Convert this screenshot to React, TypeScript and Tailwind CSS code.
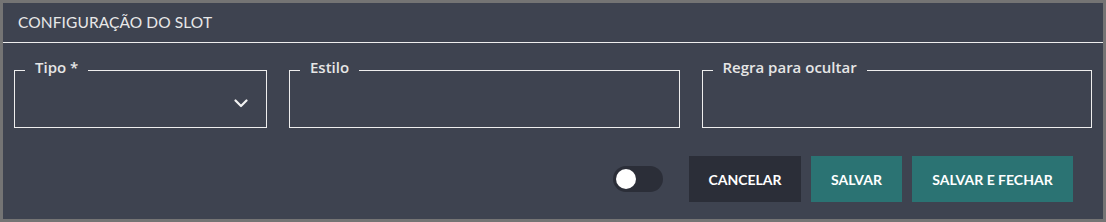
import React, { useState } from 'react';

// Slot configuration panel: title bar, three outlined fields, toggle and action buttons
function Field({ label, select = false }: { label: string; select?: boolean }) {
  return (
    <fieldset className="h-[71px] border border-[#eeeeee] pl-[10px] pr-[18px] flex items-center justify-end min-w-0">
      <legend className="px-[10px] pb-[6px] text-[15px] leading-[20px] font-semibold text-[#e6e6e6] font-['Open_Sans',sans-serif]">
        {label}
      </legend>
      {select && (
        <svg width="14" height="9" viewBox="0 0 14 9" className="mb-[4px]" fill="none">
          <path d="M1.5 1.5 L7 7 L12.5 1.5" stroke="#f2f2f2" strokeWidth="2.2" strokeLinecap="round" strokeLinejoin="round" />
        </svg>
      )}
    </fieldset>
  );
}

export default function App() {
  const [enabled, setEnabled] = useState(false);

  return (
    <main className="w-[1106px] h-[222px] border-[3px] border-[#747474] bg-[#3e4350] font-['Lato',sans-serif] flex flex-col">
      {/* Header */}
      <div className="h-[40px] border-b border-[#eeeeee] pl-[15px] flex items-center">
        <h1 className="text-[15.5px] text-[#e8e8e8] tracking-[0.1px] pt-[1px]">CONFIGURAÇÃO DO SLOT</h1>
      </div>

      {/* Fields */}
      <div className="grid grid-cols-[253px_1fr_1fr] gap-[22px] px-[11px] pt-[14px]">
        <Field label="Tipo *" select />
        <Field label="Estilo" />
        <Field label="Regra para ocultar" />
      </div>

      {/* Actions */}
      <div className="flex items-center justify-end gap-[10px] mt-[28px] pr-[30px]">
        <button
          type="button"
          onClick={() => setEnabled(!enabled)}
          className={`w-[50px] h-[26px] rounded-full p-[3px] mr-[16px] flex ${enabled ? 'justify-end bg-[#2b7373]' : 'justify-start bg-[#2b2e38]'}`}
        >
          <span className="w-[20px] h-[20px] rounded-full bg-white" />
        </button>
        <button type="button" className="w-[112px] h-[46px] bg-[#2b2e38] text-white text-[14px] font-bold">
          CANCELAR
        </button>
        <button type="button" className="w-[91px] h-[46px] bg-[#2b7373] text-white text-[14px] font-bold">
          SALVAR
        </button>
        <button type="button" className="w-[161px] h-[46px] bg-[#2b7373] text-white text-[14px] font-bold">
          SALVAR E FECHAR
        </button>
      </div>
    </main>
  );
}
